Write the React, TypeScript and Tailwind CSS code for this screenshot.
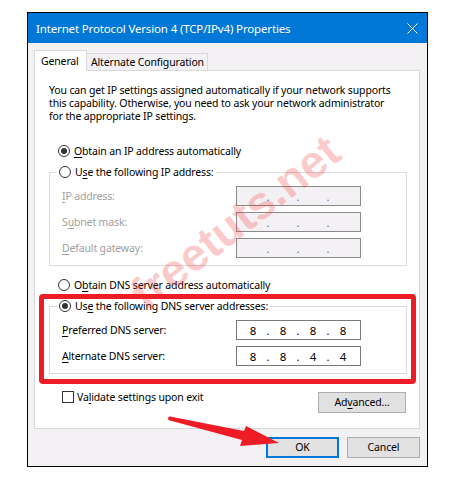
import type { ReactNode } from "react";

const font = "font-['Noto_Sans',sans-serif]";

function U({ children }: { children: ReactNode }) {
  return <span className="underline underline-offset-[2px] decoration-[1px]">{children}</span>;
}

function Radio({ checked }: { checked?: boolean }) {
  return (
    <span className="w-[12px] h-[12px] rounded-full border border-[#333] bg-white flex items-center justify-center shrink-0">
      {checked && <span className="w-[6px] h-[6px] rounded-full bg-[#333]" />}
    </span>
  );
}

function IpBox({ parts }: { parts?: string[] }) {
  const disabled = !parts;
  const vals = parts ?? ["", "", "", ""];
  return (
    <div
      className={
        "w-[125px] h-[20px] border flex items-center pl-[3px] " +
        (disabled ? "border-[#8a8a8a] bg-[#f4f1f4]" : "border-[#7a7a7a] bg-white")
      }
    >
      {vals.map((v, i) => (
        <div key={i} className="flex items-center">
          <span className="w-[26px] text-center text-[11.5px] text-black">{v}</span>
          {i < 3 && (
            <span className={"w-[4px] text-center text-[11px] " + (disabled ? "text-[#5a6a90]" : "text-black")}>.</span>
          )}
        </div>
      ))}
    </div>
  );
}

function Row({ label, parts, disabled }: { label: ReactNode; parts?: string[]; disabled?: boolean }) {
  return (
    <div className="flex items-center h-[20px]">
      <span className={"w-[174px] " + (disabled ? "text-[#a0a0a0]" : "text-black")}>{label}</span>
      <IpBox parts={parts} />
    </div>
  );
}

function Btn({ children, primary, w }: { children: ReactNode; primary?: boolean; w: string }) {
  return (
    <div
      className={
        w +
        " h-[21px] bg-[#e1e1e1] flex items-center justify-center text-black " +
        (primary ? "border-2 border-[#0078d7]" : "border border-[#adadad]")
      }
    >
      {children}
    </div>
  );
}

export default function App() {
  return (
    <div
      className={
        "min-h-screen bg-white pt-[12px] pl-[27px] relative text-[10.5px] leading-[13px] tracking-[-0.15px] " + font
      }
    >
      <div className="w-[401px] border border-black bg-[#f4f1f4] flex flex-col">
        {/* title bar */}
        <div className="h-[30px] bg-[#0078d7] flex items-center justify-between pl-[8px] pr-[9px] text-white">
          <span className="text-[11.5px]">Internet Protocol Version 4 (TCP/IPv4) Properties</span>
          <svg width="11" height="11" viewBox="0 0 11 11">
            <path d="M0.5 0.5 L10.5 10.5 M10.5 0.5 L0.5 10.5" stroke="white" strokeWidth="1" />
          </svg>
        </div>

        <div className="pt-[7px] pl-[6px] pr-[7px] pb-[8px] flex flex-col">
          {/* tabs */}
          <div className="flex items-end h-[21px] -mb-[1px] relative z-10 whitespace-nowrap">
            <div className="w-[53px] h-[21px] bg-white border border-b-0 border-[#d9d9d9] pl-[6px] pt-[4px]">General</div>
            <div className="w-[121px] h-[17px] mb-[1px] border-t border-r border-[#d9d9d9] bg-[#f4f1f4] pl-[4px] pt-[2px]">
              Alternate Configuration
            </div>
          </div>

          {/* panel */}
          <div className="h-[359px] border border-[#d9d9d9] bg-white flex flex-col pt-[13px] pl-[14px] pr-[12px]">
            <p className="whitespace-nowrap">
              You can get IP settings assigned automatically if your network supports
              <br />
              this capability. Otherwise, you need to ask your network administrator
              <br />
              for the appropriate IP settings.
            </p>

            <div className="mt-[20px] h-[16px] flex items-center gap-[4px] pl-[9px]">
              <Radio checked />
              <span>
                <U>O</U>btain an IP address automatically
              </span>
            </div>

            <fieldset className="mt-[5px] border border-[#dcdcdc] pl-[12px] pb-[7px]">
              <legend className="-ml-[5px] px-[2px] h-[16px] flex items-center gap-[4px]">
                <Radio />
                <span>
                  U<U>s</U>e the following IP address:
                </span>
              </legend>
              <div className="pt-[6px] flex flex-col gap-[6px]">
                <Row disabled label={<><U>I</U>P address:</>} />
                <Row disabled label={<>S<U>u</U>bnet mask:</>} />
                <Row disabled label={<><U>D</U>efault gateway:</>} />
              </div>
            </fieldset>

            <div className="mt-[11px] h-[16px] flex items-center gap-[4px] pl-[9px]">
              <Radio />
              <span>
                O<U>b</U>tain DNS server address automatically
              </span>
            </div>

            <fieldset className="mt-[5px] border border-[#dcdcdc] pl-[12px] pb-[7px]">
              <legend className="-ml-[5px] px-[2px] h-[16px] flex items-center gap-[4px]">
                <Radio checked />
                <span>
                  Us<U>e</U> the following DNS server addresses:
                </span>
              </legend>
              <div className="pt-[6px] flex flex-col gap-[6px]">
                <Row label={<><U>P</U>referred DNS server:</>} parts={["8", "8", "8", "8"]} />
                <Row label={<><U>A</U>lternate DNS server:</>} parts={["8", "8", "4", "4"]} />
              </div>
            </fieldset>

            <div className="mt-[15px] flex items-start justify-between pl-[13px] pr-[1px]">
              <div className="h-[16px] flex items-center gap-[3px]">
                <span className="w-[12px] h-[12px] border border-[#333] bg-white" />
                <span>
                  Va<U>l</U>idate settings upon exit
                </span>
              </div>
              <div className="mt-[3px]">
                <Btn w="w-[88px]">
                  Ad<U>v</U>anced...
                </Btn>
              </div>
            </div>
          </div>

          {/* buttons */}
          <div className="mt-[8px] flex justify-end gap-[8px]">
            <Btn w="w-[73px]" primary>
              OK
            </Btn>
            <Btn w="w-[73px]">Cancel</Btn>
          </div>
        </div>
      </div>

      {/* annotation: red highlight */}
      <div className="absolute left-[39px] top-[294px] w-[377px] h-[90px] border-[5px] border-[#ee1c25] rounded-[4px] pointer-events-none" />

      {/* annotation: watermark */}
      <div className="absolute left-[235px] top-[222px] -translate-x-1/2 -translate-y-1/2 -rotate-[38deg] text-[46px] leading-none font-bold tracking-normal font-['Liberation_Sans',sans-serif] text-[rgba(240,50,50,0.25)] whitespace-nowrap pointer-events-none">
        freetuts.net
      </div>

      {/* annotation: arrow */}
      <svg className="absolute left-0 top-0 pointer-events-none" width="470" height="482" viewBox="0 0 470 482">
        <circle cx="170" cy="418.5" r="2" fill="#ee1c25" />
        <polygon points="170,416.5 244,431 246,426 279,443 240,446 242,440 170,420.5" fill="#ee1c25" />
      </svg>
    </div>
  );
}
